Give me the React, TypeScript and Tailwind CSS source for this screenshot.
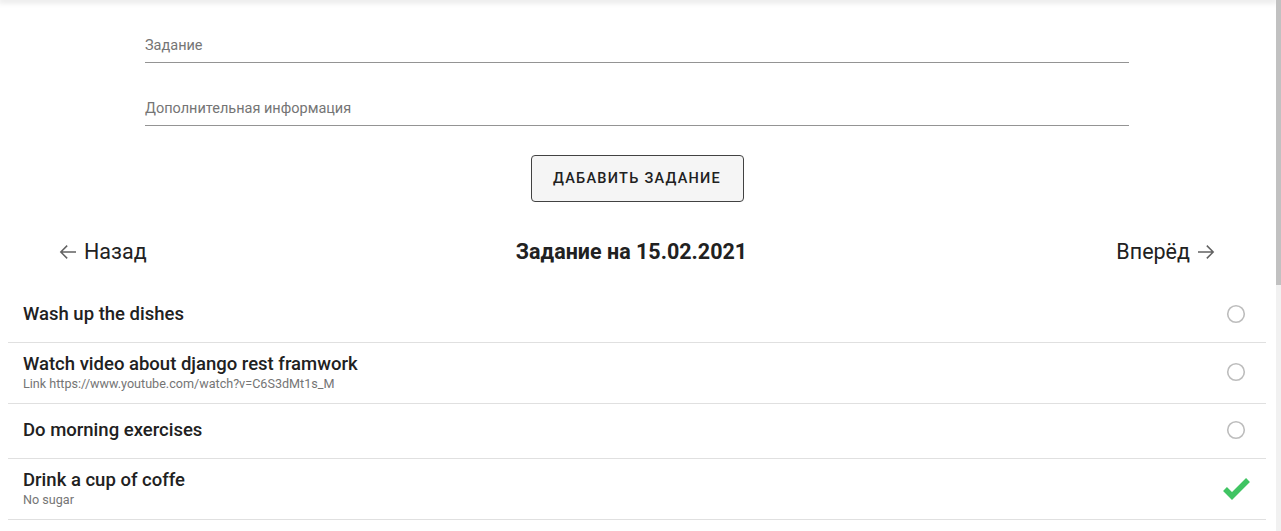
interface Task {
  id: number;
  title: string;
  note?: string;
  done: boolean;
}

const tasks: Task[] = [
  { id: 1, title: "Wash up the dishes", done: false },
  {
    id: 2,
    title: "Watch video about django rest framwork",
    note: "Link https://www.youtube.com/watch?v=C6S3dMt1s_M",
    done: false,
  },
  { id: 3, title: "Do morning exercises", done: false },
  { id: 4, title: "Drink a cup of coffe", note: "No sugar", done: true },
];

const Field = ({ label, className }: { label: string; className: string }) => (
  <div className={`w-full border-b border-[#949494] ${className}`}>
    <span className="block text-[14.5px] leading-[20px] text-[#757575]">{label}</span>
  </div>
);

// material-style arrows, 24px box
const ArrowBack = () => (
  <svg width="24" height="24" viewBox="0 0 24 24" className="fill-[#616161]">
    <path d="M20 11.25H6.6l5.1-5.1-1.05-1.05L3.75 12l6.9 6.9 1.05-1.05-5.1-5.1H20z" />
  </svg>
);

const ArrowForward = () => (
  <svg width="24" height="24" viewBox="0 0 24 24" className="fill-[#616161]">
    <path d="M4 11.25h13.4l-5.1-5.1 1.05-1.05L20.25 12l-6.9 6.9-1.05-1.05 5.1-5.1H4z" />
  </svg>
);

const StatusIcon = ({ done }: { done: boolean }) =>
  done ? (
    <svg width="30" height="26" viewBox="0 0 30 26" className="mr-[-5px]">
      <polyline points="4,14 11,21 27,5" fill="none" stroke="#40c463" strokeWidth="5.5" />
    </svg>
  ) : (
    <svg width="20" height="20" viewBox="0 0 20 20">
      <circle cx="10" cy="10" r="8.3" fill="none" stroke="#bdbdbd" strokeWidth="1.6" />
    </svg>
  );

const App = () => {
  return (
    <div className="flex min-h-screen bg-white font-['Roboto',sans-serif] text-[#212121]">
      <main className="flex-1">
        <div className="h-0 shadow-[0_0_6px_2px_rgba(0,0,0,0.14)]" />

        <div className="ml-2 mr-[10px]">
          <form className="flex flex-col items-center px-[137px] pt-[36px]">
            <Field label="Задание" className="pb-[6px]" />
            <Field label="Дополнительная информация" className="mt-[36px] pb-[6px]" />
            <button
              type="button"
              className="mt-[29px] h-[47px] w-[213px] rounded-[4px] border border-[#424242] bg-[#f5f5f5] text-[14.5px] font-medium uppercase tracking-[1.25px] text-[#212121]"
            >
              Дабавить задание
            </button>
          </form>

          <div className="mt-[36px] flex items-center justify-between px-[48px]">
            <button type="button" className="flex items-center gap-1 text-[21.5px] leading-[28px]">
              <ArrowBack />
              Назад
            </button>
            <h2 className="text-[21.5px] font-bold leading-[28px]">Задание на 15.02.2021</h2>
            <button type="button" className="flex items-center gap-1 text-[21.5px] leading-[28px]">
              Вперёд
              <ArrowForward />
            </button>
          </div>

          <ul className="mt-[22px]">
            {tasks.map((task) => (
              <li
                key={task.id}
                className={`flex items-center justify-between border-b border-[#e0e0e0] pl-[15px] pr-[20px] ${
                  task.note ? "pt-[9px] pb-[11px]" : "pt-[14px] pb-[16px]"
                }`}
              >
                <div>
                  <p className="text-[18.5px] font-medium leading-[24px]">{task.title}</p>
                  {task.note && (
                    <p className="text-[12.6px] leading-[16px] text-[#757575]">{task.note}</p>
                  )}
                </div>
                <StatusIcon done={task.done} />
              </li>
            ))}
          </ul>
        </div>
      </main>

      <aside className="flex w-[5px] flex-col bg-[#f1f1f1]">
        <div className="h-[285px] bg-[#c1c1c1]" />
      </aside>
    </div>
  );
};

export default App;
